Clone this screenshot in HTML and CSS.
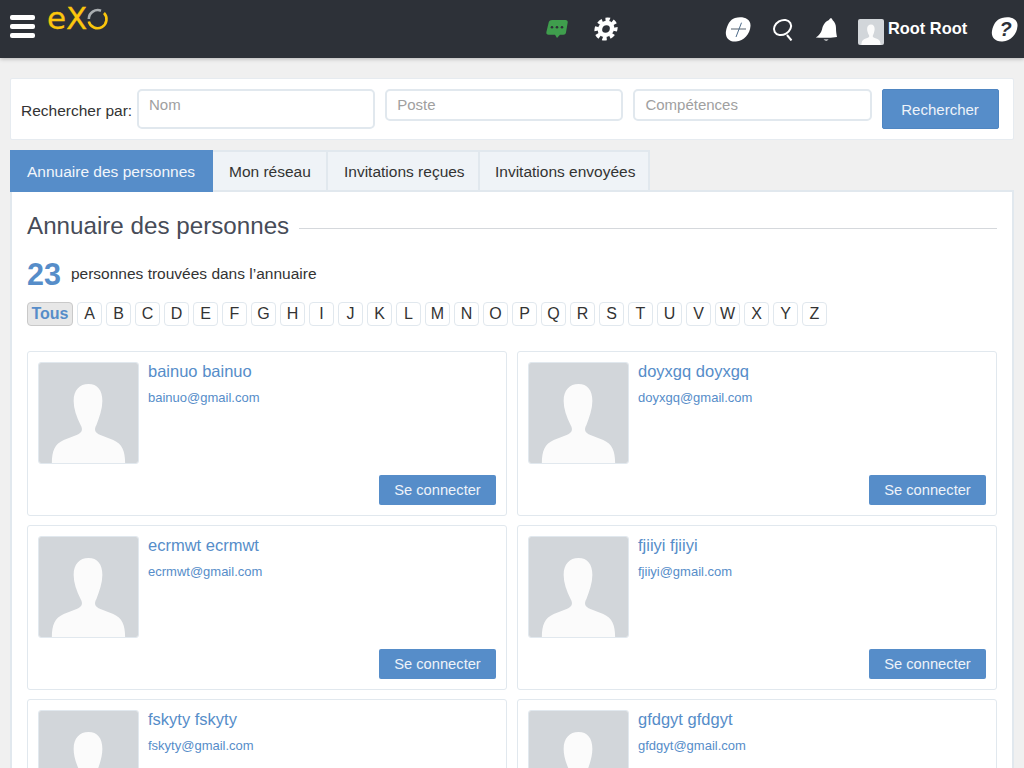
FILE: index.html
```html
<!DOCTYPE html>
<html lang="fr">
<head>
    <meta charset="UTF-8">
    <meta name="viewport" content="width=device-width, initial-scale=1.0">
    <title>Annuaire des personnes</title>
    <link rel="stylesheet" href="styles.css">
</head>
<body>
    <svg class="defs" width="0" height="0">
        <symbol id="person" viewBox="0 0 100 100" preserveAspectRatio="none">
            <rect width="100" height="100" fill="#d2d6da"/>
            <path d="M13 100C13 88 16 81 25 77L38 72C43 70 45 67 42 62C38 54 35 46 35 38C35 27 41 21 50 21C59 21 64 27 64 38C64 46 61 54 58 62C55 67 57 70 62 72L75 77C84 81 87 88 87 100Z" fill="#fbfbfb"/>
        </symbol>
    </svg>

    <!-- Top bar -->
    <header class="topbar">
        <div class="burger"><span></span><span></span><span></span></div>
        <svg class="logo" width="62" height="38" viewBox="0 0 62 38" fill="none" stroke-width="2.600">
            <text class="logo-text" x="0" y="29">eX</text>
            <path d="M57 13A9 9 0 1 1 41.800 21.500" stroke="#fbc60d"/>
            <path d="M41.800 19A9 9 0 0 1 54 10.700" stroke="#a9adb0"/>
        </svg>
        <svg class="ico-chat" width="22" height="20" viewBox="0 0 22 20">
            <path d="M6 1H19.500C21 1 22 2 21.700 3.500L20 13.500C19.700 15 18.700 15.700 17.500 15.700H14L11 19L9 15.700H2.500C1 15.700 0 14.700 .4 13L2.800 3C3.200 1.700 4.500 1 6 1Z" fill="#3f9e4d"/>
            <circle cx="6" cy="8.300" r="1.300" fill="#2d3138"/><circle cx="11" cy="8.300" r="1.300" fill="#2d3138"/><circle cx="16" cy="8.300" r="1.300" fill="#2d3138"/>
        </svg>
        <svg class="ico-gear" width="24" height="24" viewBox="0 0 24 24">
            <g transform="translate(1.700 0) skewX(-8)">
                <circle cx="12" cy="12" r="6" fill="none" stroke="#fff" stroke-width="4.400"/>
                <circle cx="12" cy="12" r="9.500" fill="none" stroke="#fff" stroke-width="4" stroke-dasharray="4.300 3.160" stroke-dashoffset="2.150"/>
            </g>
        </svg>
        <svg class="ico-plus" width="26" height="25" viewBox="0 0 26 25">
            <path d="M10 1C17 -1 26 1 25.500 9C25 17 19 24 11 24.500C3 25 0 19 1 14C2 8 5 2.500 10 1Z" fill="#fff"/>
            <path d="M6 12H21" stroke="#a9afb5" stroke-width="2"/>
            <path d="M16.500 5.700L11 20" stroke="#4d6b8a" stroke-width="1"/>
        </svg>
        <svg class="ico-search" width="21" height="23" viewBox="0 0 21 23" fill="none" stroke="#fff" stroke-width="2">
            <ellipse cx="10.500" cy="9.500" rx="9" ry="7" transform="rotate(-30 10.500 9.500)"/>
            <path d="M15 17L19.500 22.500"/>
        </svg>
        <svg class="ico-bell" width="23" height="25" viewBox="0 0 23 25">
            <path d="M14 3C15 .5 17 .5 17.500 3C20 5 21 8 21 11C21 15 21.500 17 22 20C15 21 7 21 .8 20.500C4 18.500 6 16 7 12.500C8 8 10 4.500 14 3Z" fill="#fff"/>
            <path d="M8.500 22.500H13.500C12.500 24 10 24 8.500 22.500Z" fill="#fff"/>
        </svg>
        <svg class="top-avatar" width="26" height="26"><use href="#person"/></svg>
        <span class="top-name">Root Root</span>
        <svg class="ico-help" width="27" height="25" viewBox="0 0 27 25">
            <path d="M11 1C18 -1 27 1 26.500 9C26 17 20 24 11.500 24.500C3 25 0 19 1 14C2 8 5 2.500 11 1Z" fill="#fff"/>
            <text x="8.500" y="19" class="help-mark">?</text>
        </svg>
    </header>

    <main class="page">
        <!-- Search -->
        <form class="search-box">
            <span class="search-label">Rechercher par:</span>
            <div class="field field-tall">Nom</div>
            <div class="field">Poste</div>
            <div class="field">Compétences</div>
            <button type="button" class="search-btn">Rechercher</button>
        </form>

        <!-- Tabs -->
        <nav class="tabs">
            <a class="tab tab-active">Annuaire des personnes</a>
            <a class="tab">Mon réseau</a>
            <a class="tab">Invitations reçues</a>
            <a class="tab">Invitations envoyées</a>
        </nav>

        <section class="panel">
            <div class="panel-title">
                <h2>Annuaire des personnes</h2>
                <span class="title-line"></span>
            </div>
            <p class="count"><strong>23</strong> personnes trouvées dans l’annuaire</p>
            <div class="letters">
                <a class="letter letter-all">Tous</a>
                <a class="letter">A</a><a class="letter">B</a><a class="letter">C</a><a class="letter">D</a>
                <a class="letter">E</a><a class="letter">F</a><a class="letter">G</a><a class="letter">H</a>
                <a class="letter">I</a><a class="letter">J</a><a class="letter">K</a><a class="letter">L</a>
                <a class="letter">M</a><a class="letter">N</a><a class="letter">O</a><a class="letter">P</a>
                <a class="letter">Q</a><a class="letter">R</a><a class="letter">S</a><a class="letter">T</a>
                <a class="letter">U</a><a class="letter">V</a><a class="letter">W</a><a class="letter">X</a>
                <a class="letter">Y</a><a class="letter">Z</a>
            </div>

            <div class="people">
                <article class="person">
                    <svg class="avatar"><use href="#person"/></svg>
                    <div class="info"><a class="name">bainuo bainuo</a><a class="mail">bainuo@gmail.com</a></div>
                    <button type="button" class="connect">Se connecter</button>
                </article>
                <article class="person">
                    <svg class="avatar"><use href="#person"/></svg>
                    <div class="info"><a class="name">doyxgq doyxgq</a><a class="mail">doyxgq@gmail.com</a></div>
                    <button type="button" class="connect">Se connecter</button>
                </article>
                <article class="person">
                    <svg class="avatar"><use href="#person"/></svg>
                    <div class="info"><a class="name">ecrmwt ecrmwt</a><a class="mail">ecrmwt@gmail.com</a></div>
                    <button type="button" class="connect">Se connecter</button>
                </article>
                <article class="person">
                    <svg class="avatar"><use href="#person"/></svg>
                    <div class="info"><a class="name">fjiiyi fjiiyi</a><a class="mail">fjiiyi@gmail.com</a></div>
                    <button type="button" class="connect">Se connecter</button>
                </article>
                <article class="person">
                    <svg class="avatar"><use href="#person"/></svg>
                    <div class="info"><a class="name">fskyty fskyty</a><a class="mail">fskyty@gmail.com</a></div>
                </article>
                <article class="person">
                    <svg class="avatar"><use href="#person"/></svg>
                    <div class="info"><a class="name">gfdgyt gfdgyt</a><a class="mail">gfdgyt@gmail.com</a></div>
                </article>
            </div>
        </section>
    </main>
</body>
</html>
```

FILE: styles.css
```css
html, body {
    height: 768px;
    overflow: hidden;
}

body {
    margin: 0;
    background: #f0f0f0;
    color: #333;
    font-family: 'Liberation Sans', Arial, sans-serif;
    font-size: 16px;
}

.defs {
    display: block;
    height: 0;
}

/* Top bar */
.topbar {
    display: flex;
    align-items: flex-start;
    height: 58px;
    background: #2d3138;
    box-shadow: 0 1px 4px rgba(0, 0, 0, 0.25);
}

.burger {
    display: flex;
    flex-direction: column;
    gap: 4px;
    width: 25px;
    margin: 15px 0 0 10px;
}

.burger span {
    height: 5px;
    background: #fff;
    border-radius: 2px;
}

.logo {
    flex: none;
    margin: 0 -1px 0 12px;
}

.logo-text {
    fill: #fbc60d;
    stroke: #fbc60d;
    stroke-width: 0.3px;
    font: 31px 'DejaVu Sans', sans-serif;
}

.ico-chat { margin: 19px 0 0 438px; }
.ico-gear { margin: 17px 0 0 26px; }
.ico-plus { margin: 17px 0 0 107px; }
.ico-search { margin: 18px 0 0 21px; }
.ico-bell { margin: 17px 0 0 22px; }
.top-avatar { margin: 19px 0 0 20px; border-radius: 2px; }

.top-name {
    margin: 19px 0 0 4px;
    color: #fff;
    font-size: 16.400px;
    font-weight: bold;
    line-height: 19px;
}

.ico-help { margin: 17px 0 0 24px; }

.help-mark {
    fill: #2d3138;
    font: italic bold 20px 'Liberation Sans', Arial, sans-serif;
}

.page {
    padding: 20px 10px 0;
}

/* Search */
.search-box {
    display: flex;
    align-items: flex-start;
    height: 62px;
    box-sizing: border-box;
    padding: 10px 14px 0 10px;
    background: #fff;
    border: 1px solid #e6ebf0;
    border-radius: 2px;
    margin-bottom: 10px;
}

.search-label {
    flex: none;
    width: 116px;
    margin-top: 12px;
    font-size: 15.500px;
    white-space: nowrap;
    line-height: 20px;
}

.field {
    width: 238.200px;
    height: 32px;
    box-sizing: border-box;
    margin-right: 10px;
    padding: 5px 10px;
    border: 2px solid #e1e8ee;
    border-radius: 5px;
    color: #a0a0a0;
    font-size: 15px;
    line-height: 18px;
}

.field-tall {
    height: 40px;
}

.search-btn {
    flex: none;
    width: 117px;
    height: 40px;
    padding: 0;
    background: #568dc9;
    color: #eef3f9;
    border: 1px solid #4f86c2;
    border-radius: 2px;
    font-family: inherit;
    font-size: 15px;
}

/* Tabs */
.tabs {
    display: grid;
    grid-template-columns: 203px 115px 152px 170px;
    box-sizing: border-box;
    height: 42px;
    border-bottom: 2px solid #e1e8ee;
}

.tab {
    box-sizing: border-box;
    height: 42px;
    padding: 10px 0 0 16px;
    background: #eff3f7;
    border: 2px solid #e1e8ee;
    border-left: 0;
    font-size: 15.500px;
    line-height: 19px;
    white-space: nowrap;
}

.tab:last-child {
    padding-left: 15px;
}

.tab-active {
    padding: 12px 0 0 17px;
    background: #568dc9;
    border: 0;
    color: #f2f6fb;
}

/* Panel */
.panel {
    box-sizing: border-box;
    height: 590px;
    padding: 20px 15px 0;
    background: #fff;
    border: 2px solid #e1e8ee;
    border-top-width: 0;
}

.panel-title {
    display: flex;
    align-items: center;
    gap: 10px;
    height: 28px;
}

.panel-title h2 {
    margin: 0;
    color: #474c58;
    font-size: 24.200px;
    font-weight: normal;
    line-height: 28px;
    white-space: nowrap;
}

.title-line {
    flex: 1;
    height: 1px;
    margin-top: 5px;
    background: #d5d8dc;
}

.count {
    display: flex;
    align-items: center;
    gap: 10px;
    height: 34px;
    margin: 17px 0 0;
    font-size: 15.500px;
}

.count strong {
    color: #568dc9;
    font-size: 30.500px;
}

.letters {
    display: flex;
    gap: 4px;
    margin-top: 11px;
}

.letter {
    box-sizing: border-box;
    width: 25px;
    height: 24px;
    border: 1px solid #e1e8ee;
    border-radius: 4px;
    text-align: center;
    line-height: 22px;
}

.letter-all {
    width: 46px;
    background: #e7e7e7;
    border-color: #c9c9c9;
    color: #568dc9;
    font-weight: bold;
}

/* People */
.people {
    display: grid;
    grid-template-columns: 480px 480px;
    gap: 9px 10px;
    margin-top: 25px;
}

.person {
    display: grid;
    grid-template-columns: 101px 1fr;
    grid-template-rows: 113px 30px;
    column-gap: 9px;
    box-sizing: border-box;
    height: 165px;
    padding: 10px;
    background: #fff;
    border: 1px solid #e1e8ee;
    border-radius: 3px;
}

.avatar {
    width: 101px;
    height: 102px;
    box-sizing: border-box;
    border: 1px solid #e1e8ee;
    border-radius: 3px;
}

.name {
    display: block;
    color: #568dc9;
    font-size: 16.500px;
    line-height: 19px;
}

.mail {
    display: block;
    margin-top: 9px;
    color: #568dc9;
    font-size: 13px;
    line-height: 16px;
}

.connect {
    grid-column: 2;
    justify-self: end;
    width: 117px;
    height: 30px;
    padding: 0;
    background: #568dc9;
    color: #eef3f9;
    border: 0;
    border-radius: 2px;
    font-family: inherit;
    font-size: 14.700px;
}
```
